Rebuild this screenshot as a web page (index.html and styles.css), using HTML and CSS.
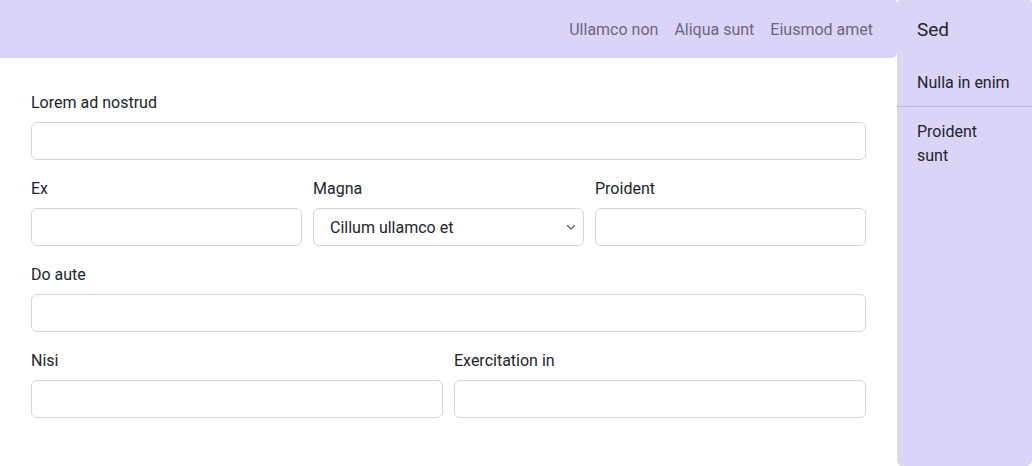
FILE: index.html
```html
<!DOCTYPE html>
<html lang="en">
<head>
<meta charset="utf-8">
<link rel="stylesheet" href="styles.css">
</head>
<body>
<div class="layout">
  <div class="main">
    <header class="topbar">
      <nav class="nav">
        <a class="nav-link" href="#">Ullamco non</a>
        <a class="nav-link" href="#">Aliqua sunt</a>
        <a class="nav-link" href="#">Eiusmod amet</a>
      </nav>
    </header>
    <form class="form">
      <div class="field">
        <label class="label">Lorem ad nostrud</label>
        <input class="control" type="text">
      </div>
      <div class="row row-3">
        <div class="field">
          <label class="label">Ex</label>
          <input class="control" type="text">
        </div>
        <div class="field">
          <label class="label">Magna</label>
          <div class="select-wrap">
            <select class="control select">
              <option>Cillum ullamco et</option>
            </select>
            <svg class="chevron" width="10" height="7" viewBox="0 0 10 7"><path d="M1.5 1.5 L5 5 L8.5 1.5" fill="none" stroke="#555" stroke-width="1.1" stroke-linecap="round" stroke-linejoin="round"/></svg>
          </div>
        </div>
        <div class="field">
          <label class="label">Proident</label>
          <input class="control" type="text">
        </div>
      </div>
      <div class="field">
        <label class="label">Do aute</label>
        <input class="control" type="text">
      </div>
      <div class="row row-2">
        <div class="field">
          <label class="label">Nisi</label>
          <input class="control" type="text">
        </div>
        <div class="field">
          <label class="label">Exercitation in</label>
          <input class="control" type="text">
        </div>
      </div>
    </form>
  </div>
  <aside class="sidebar">
    <div class="side-title">Sed</div>
    <div class="side-item">Nulla in enim</div>
    <div class="side-item">Proident sunt</div>
  </aside>
</div>
</body>
</html>
```
FILE: styles.css
```css
* { box-sizing: border-box; }
html, body { margin: 0; padding: 0; background: #fff; }
body {
  font-family: Roboto, "Liberation Sans", sans-serif;
  font-size: 16px;
  line-height: 24px;
  color: #212529;
}
.layout {
  display: flex;
  height: 466px;
  overflow: hidden;
}
.main {
  flex: 1;
  min-width: 0;
}
.topbar {
  height: 58px;
  background: #dbd3f8;
  border-radius: 0 3px 6px 0;
  display: flex;
  align-items: center;
  justify-content: flex-end;
  padding: 2px 16px 0 16px;
}
.nav { display: flex; }
.nav-link {
  color: #6b6783;
  text-decoration: none;
  padding: 8px 8px;
}
.form {
  padding: 32px 31px 0 31px;
  display: flex;
  flex-direction: column;
  gap: 16px;
}
.field {
  display: flex;
  flex-direction: column;
  gap: 7px;
  min-width: 0;
}
.label { display: block; padding-top: 1px; }
.row { display: grid; gap: 11px; }
.row-3 { grid-template-columns: 1fr 1fr 1fr; }
.row-2 { grid-template-columns: 1fr 1fr; }
.control {
  display: block;
  width: 100%;
  height: 38px;
  border: 1px solid #d3d5da;
  border-radius: 6px;
  background: #fff;
  font: inherit;
  color: #212529;
  padding: 7px 12px 5px 12px;
  margin: 0;
  outline: none;
}
.select-wrap { position: relative; }
.select {
  appearance: none;
  -webkit-appearance: none;
  padding-left: 16px;
  padding-right: 30px;
}
.chevron {
  position: absolute;
  right: 8px;
  top: 16px;
  pointer-events: none;
}
.sidebar {
  width: 135px;
  flex: none;
  background: #dbd3f8;
  border-radius: 3px 3px 6px 6px;
  height: 466px;
}
.side-title {
  height: 58px;
  display: flex;
  align-items: center;
  padding: 2px 20px 0 20px;
  font-size: 19px;
}
.side-item {
  padding: 13px 20px 11px 20px;
}
.side-item + .side-item {
  border-top: 1px solid #bfb6dc;
}
```
